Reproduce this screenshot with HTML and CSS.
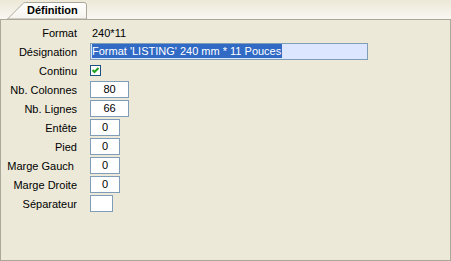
FILE: index.html
```html
<!DOCTYPE html>
<html>

<head>
    <title>Définition</title>
    <link rel="stylesheet" href="styles.css">
</head>

<body>

    <div class="tabbar">
        <div class="tab">
            <svg class="tab-shape" width="80" height="18" viewBox="0 0 80 18">
                <defs>
                    <linearGradient id="tabfill" x1="0" y1="0" x2="0" y2="1">
                        <stop offset="0" stop-color="#ffffff" />
                        <stop offset="1" stop-color="#f4f3ee" />
                    </linearGradient>
                </defs>
                <path d="M0.5 18 L15.5 3 Q16.5 1.5 18.5 1.5 L77 1.5 Q79.5 1.5 79.5 4 L79.5 18 Z"
                    fill="url(#tabfill)" stroke="#aca899" stroke-width="1" />
            </svg>
            <span class="tab-label">Définition</span>
        </div>
    </div>

    <div class="panel">
        <div class="form">
            <label>Format</label>
            <span class="value">240*11</span>

            <label>Désignation</label>
            <div class="field wide focused"><span class="selected">Format 'LISTING' 240 mm * 11 Pouces</span></div>

            <label>Continu</label>
            <div class="check">
                <svg width="9" height="9" viewBox="0 0 9 9">
                    <path d="M1.5 4 L3.5 6 L7.5 2" fill="none" stroke="#21a121" stroke-width="2" />
                </svg>
            </div>

            <label>Nb. Colonnes</label>
            <div class="field num">80</div>

            <label>Nb. Lignes</label>
            <div class="field num">66</div>

            <label>Entête</label>
            <div class="field small">0</div>

            <label>Pied</label>
            <div class="field small">0</div>

            <label>Marge Gauch&nbsp;</label>
            <div class="field small">0</div>

            <label>Marge Droite</label>
            <div class="field small">0</div>

            <label>Séparateur</label>
            <div class="field tiny"></div>
        </div>
    </div>

</body>

</html>
```

FILE: styles.css
```css
body {
    margin: 0;
    width: 451px;
    height: 261px;
    background-color: #ece9d8;
    font-family: 'Liberation Sans', Arial, sans-serif;
    font-size: 11px;
    color: #000;
    overflow: hidden;
}

.tabbar {
    height: 19px;
    background: linear-gradient(#ece9d8, #f8f7f2);
    display: flex;
    align-items: flex-end;
}

.tab {
    position: relative;
    margin-left: 7px;
    width: 80px;
    height: 18px;
}

.tab-shape {
    position: absolute;
    left: 0;
    top: 0;
}

.tab-label {
    position: relative;
    display: block;
    padding-left: 20px;
    line-height: 18px;
    font-weight: bold;
}

.panel {
    height: 242px;
    box-sizing: border-box;
    border: 1px solid #aca899;
    border-top-color: #aca899;
    padding-top: 3px;
}

.form {
    display: grid;
    grid-template-columns: 76px auto;
    grid-auto-rows: 19px;
    column-gap: 13px;
    align-items: center;
    justify-items: start;
}

label {
    justify-self: end;
    white-space: pre;
}

.value {
    padding-left: 2px;
}

.field {
    box-sizing: border-box;
    height: 17px;
    border: 1px solid #7f9db9;
    background-color: #fff;
    line-height: 15px;
    text-align: center;
}

.wide {
    width: 278px;
    text-align: left;
    padding-left: 1px;
}

.focused {
    background-color: #dde6ff;
}

.selected {
    background-color: #316ac5;
    color: #fff;
    padding: 1px 1px 1px 0;
}

.num {
    width: 39px;
}

.small {
    width: 30px;
}

.tiny {
    width: 23px;
}

.check {
    box-sizing: border-box;
    width: 11px;
    height: 11px;
    border: 1px solid #1c5180;
    background-color: #fff;
    display: flex;
    align-items: center;
    justify-content: center;
}
```
